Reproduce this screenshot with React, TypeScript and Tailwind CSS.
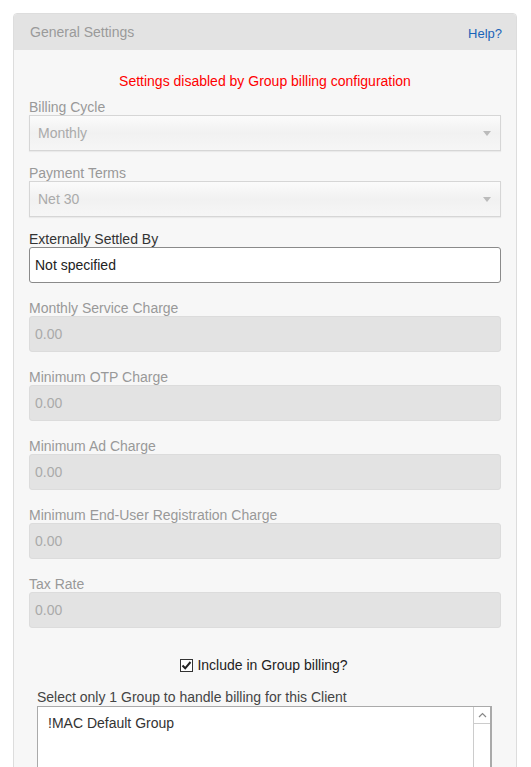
import React from "react";

/* ---------------- FIELDS ---------------- */
const SelectField = ({ label, value }: { label: string; value: string }) => (
  <div className="mb-[14px]">
    <div className="h-[16px] leading-[16px] text-[14px] text-[#999]">{label}</div>
    <div className="relative h-[36px] border border-[#d6d6d6] bg-gradient-to-b from-[#fbfbfb] via-[#f1f1f1] to-[#f6f6f6] shadow-[0_1px_1px_rgba(0,0,0,0.05)] flex items-center pl-[8px]">
      <span className="text-[14px] text-[#aaa]">{value}</span>
      <span className="absolute right-[9px] top-[15px] w-0 h-0 border-l-[4px] border-r-[4px] border-t-[5px] border-l-transparent border-r-transparent border-t-[#bbb]" />
    </div>
  </div>
);

const DisabledInput = ({ label, value }: { label: string; value: string }) => (
  <div className="mb-[17px]">
    <div className="h-[16px] leading-[16px] text-[14px] text-[#999]">{label}</div>
    <div className="h-[36px] rounded-[3px] border border-[#dcdcdc] bg-[#e3e3e3] flex items-center pl-[5px]">
      <span className="text-[14px] text-[#aaa]">{value}</span>
    </div>
  </div>
);

/* ---------------- MAIN ---------------- */
export default function App() {
  return (
    <div
      className="w-[531px] h-[767px] overflow-hidden bg-white pt-[13px] pl-[13px]"
      style={{ fontFamily: '"Liberation Sans", Arial, sans-serif' }}
    >
      <div className="w-[504px] border border-[#dddddd] rounded-t-[4px] overflow-hidden">
        {/* header */}
        <div className="h-[36px] bg-[#e3e3e3] flex items-center justify-between pl-[16px] pr-[14px]">
          <span className="text-[14px] text-[#9a9a9a] mt-[1px]">General Settings</span>
          <span className="text-[13px] text-[#1a63b8] mt-[4px]">Help?</span>
        </div>

        {/* body */}
        <div className="bg-[#f7f7f7] px-[15px] pt-[23px] pb-[40px]">
          <div className="text-center text-[14px] leading-[16px] text-[#ff0000] mb-[10px]">
            Settings disabled by Group billing configuration
          </div>

          <SelectField label="Billing Cycle" value="Monthly" />
          <SelectField label="Payment Terms" value="Net 30" />

          <div className="mb-[17px]">
            <div className="h-[16px] leading-[16px] text-[14px] text-[#333]">Externally Settled By</div>
            <div className="h-[36px] rounded-[3px] border border-[#8a8a8a] bg-white flex items-center pl-[5px]">
              <span className="text-[14px] text-[#222]">Not specified</span>
            </div>
          </div>

          <DisabledInput label="Monthly Service Charge" value="0.00" />
          <DisabledInput label="Minimum OTP Charge" value="0.00" />
          <DisabledInput label="Minimum Ad Charge" value="0.00" />
          <DisabledInput label="Minimum End-User Registration Charge" value="0.00" />
          <DisabledInput label="Tax Rate" value="0.00" />

          {/* group billing */}
          <div className="flex items-center justify-center gap-[4px] mt-[29px] h-[16px] pr-[2px]">
            <span className="w-[13px] h-[13px] border border-[#333] bg-white flex items-center justify-center">
              <svg width="11" height="11" viewBox="0 0 11 11">
                <path d="M1.5 5.5 L4.2 8.3 L9.5 2" fill="none" stroke="#222" strokeWidth="2" />
              </svg>
            </span>
            <span className="text-[14px] text-[#222]">Include in Group billing?</span>
          </div>

          <div className="px-[8px] mt-[16px]">
            <div className="h-[16px] leading-[16px] text-[14px] text-[#444]">
              Select only 1 Group to handle billing for this Client
            </div>
            <div className="mt-[1px] w-[455px] h-[100px] border-[2px] border-[#aaa] border-l-[1px] border-t-[1px] bg-white flex">
              <div className="flex-1 pl-[10px] pt-[6px] text-[14px] text-[#333]">!MAC Default Group</div>
              <div className="w-[17px] border-l border-[#ccc] flex flex-col">
                <div className="h-[17px] border-b border-[#ccc] flex items-center justify-center">
                  <svg width="9" height="6" viewBox="0 0 9 6">
                    <path d="M1 5 L4.5 1.5 L8 5" fill="none" stroke="#888" strokeWidth="1.2" />
                  </svg>
                </div>
              </div>
            </div>
          </div>
        </div>
      </div>
    </div>
  );
}
